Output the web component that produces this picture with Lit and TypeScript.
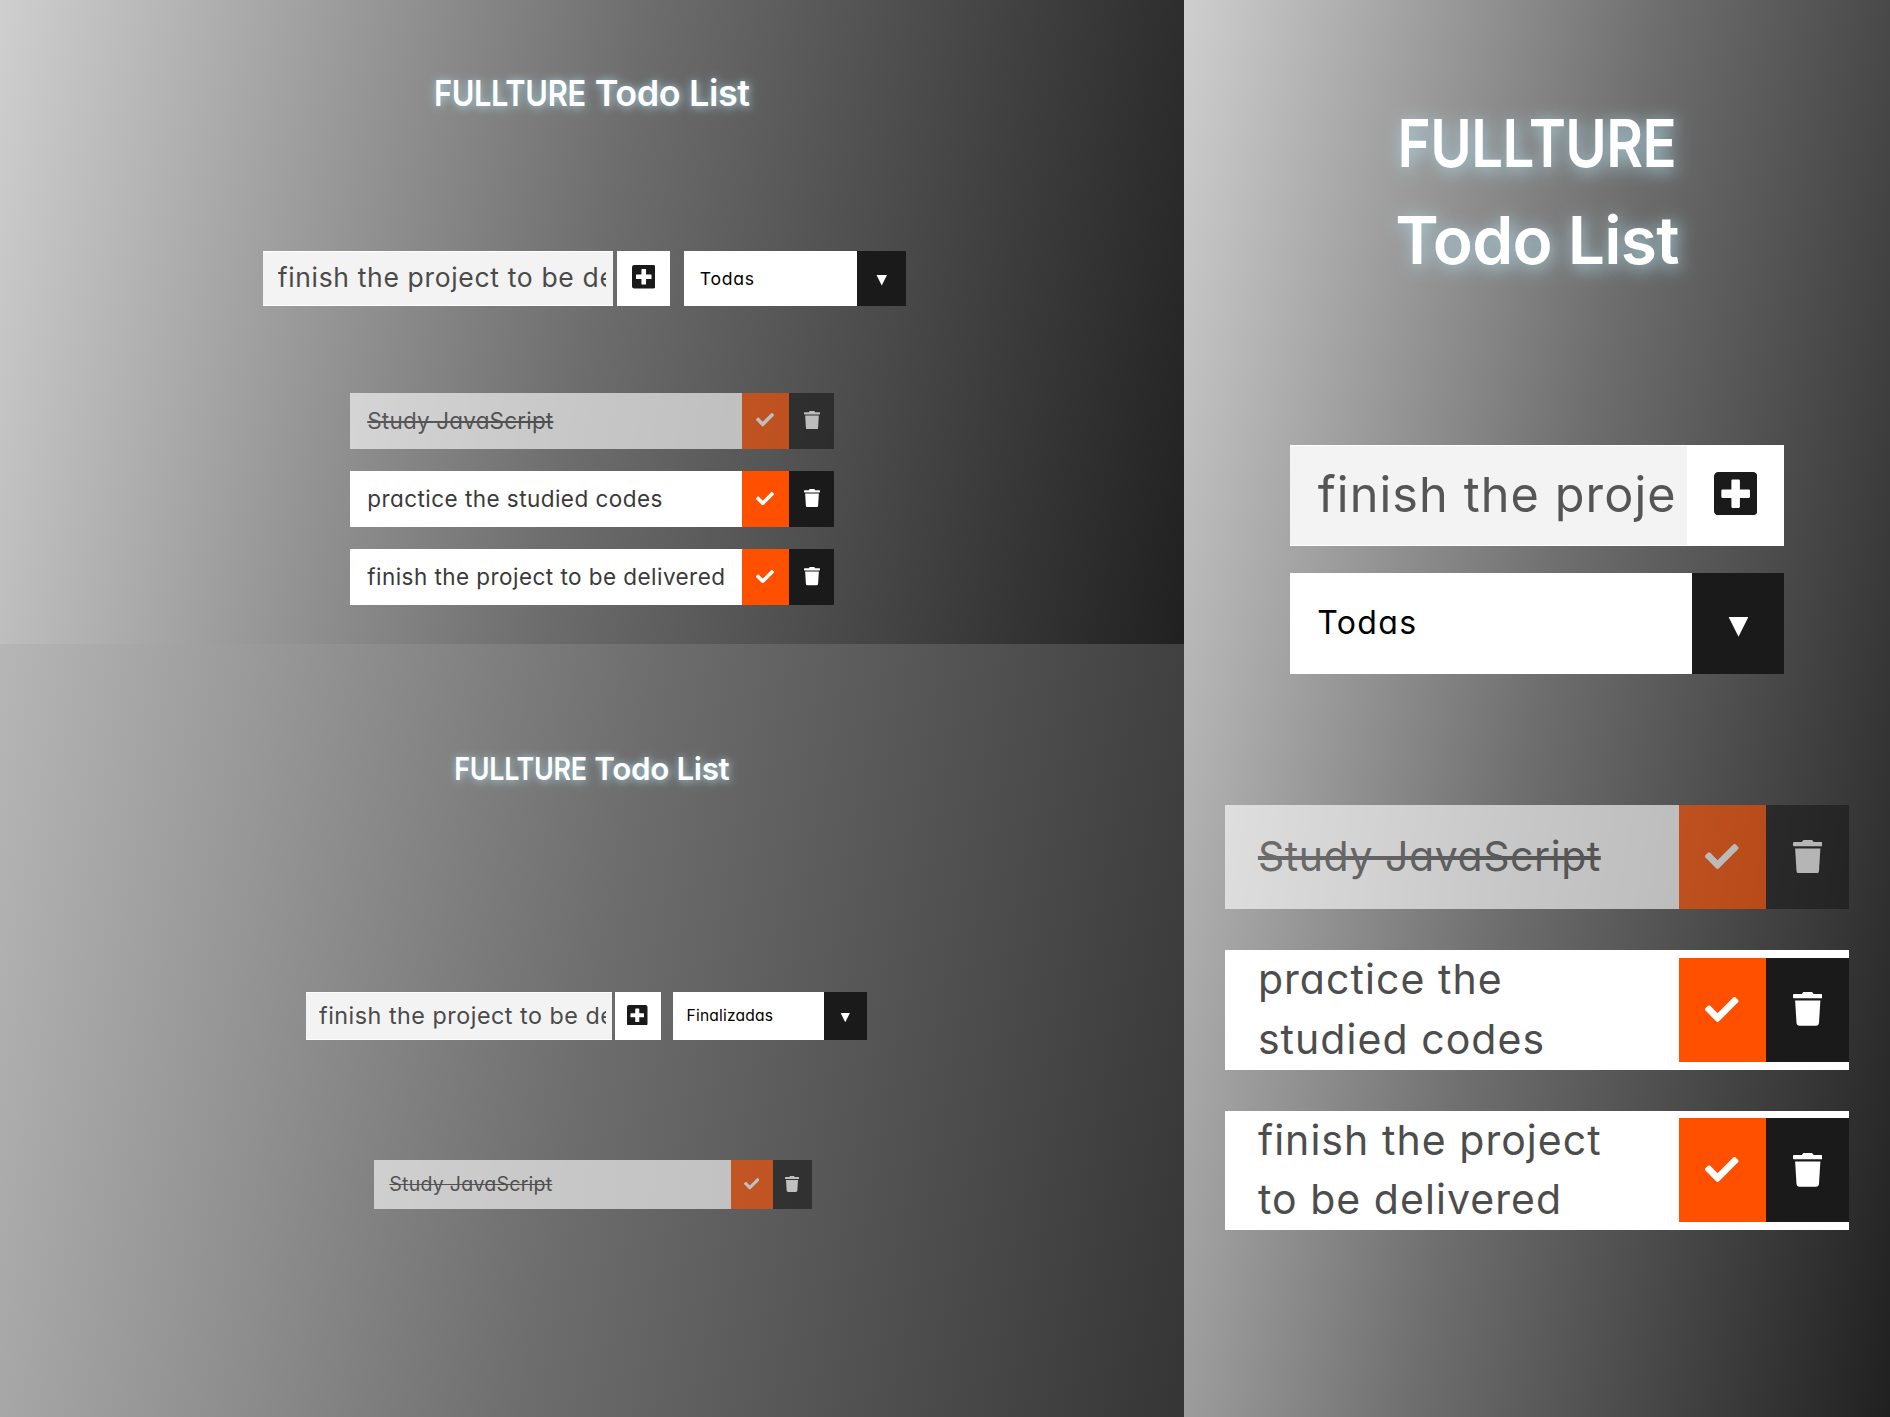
import { LitElement, html, css, svg } from "lit";
import { customElement, property } from "lit/decorators.js";

interface Todo {
  text: string;
  done?: boolean;
}

const TODOS: Todo[] = [
  { text: "Study JavaScript", done: true },
  { text: "practice the studied codes" },
  { text: "finish the project to be delivered" },
];

const icon = (viewBox: string, name: string, shape: unknown) =>
  html`<svg class="icon ${name}" viewBox=${viewBox} aria-hidden="true">${shape}</svg>`;

const plusIcon = () =>
  icon(
    "0 0 448 448",
    "plus",
    svg`<path fill-rule="evenodd" d="M44 0H404a44 44 0 0 1 44 44V404a44 44 0 0 1-44 44H44a44 44 0 0 1-44-44V44A44 44 0 0 1 44 0ZM192 78q-12 0-12 12v90H88q-12 0-12 12v64q0 12 12 12h92v92q0 12 12 12h64q12 0 12-12v-92h92q12 0 12-12v-64q0-12-12-12h-92V90q0-12-12-12Z"/>`
  );

const checkIcon = () =>
  icon(
    "0 65 512 382",
    "check",
    svg`<path d="M173.898 439.404l-166.4-166.4c-9.997-9.997-9.997-26.206 0-36.204l36.203-36.204c9.997-9.998 26.207-9.998 36.204 0L192 312.69 432.095 72.596c9.997-9.997 26.207-9.997 36.204 0l36.203 36.204c9.997 9.997 9.997 26.206 0 36.204l-294.4 294.401c-9.998 9.997-26.207 9.997-36.204-.001z"/>`
  );

const trashIcon = () =>
  icon(
    "0 0 448 512",
    "trash",
    svg`<path d="M432 32H312l-9.4-18.7A24 24 0 0 0 281.1 0H166.8a23.72 23.72 0 0 0-21.4 13.3L136 32H16A16 16 0 0 0 0 48v32a16 16 0 0 0 16 16h416a16 16 0 0 0 16-16V48a16 16 0 0 0-16-16zM32 128l21.2 339a48 48 0 0 0 47.9 45h245.8a48 48 0 0 0 47.9-45L416 128z"/>`
  );

@customElement("todo-screen")
export class TodoScreen extends LitElement {
  @property() filter = "Todas";
  @property() draft = "";
  @property({ attribute: false }) todos: Todo[] = [];

  static styles = css`
    :host {
      display: block;
      overflow: hidden;
      font-family: Inter, "Open Sans", sans-serif;
      font-feature-settings: "cv11";
    }
    .header {
      box-sizing: border-box;
      height: var(--header-h);
      padding-top: var(--header-pad);
    }
    .title {
      margin: 0;
      display: flex;
      flex-direction: var(--title-dir, row);
      justify-content: center;
      align-items: center;
      gap: var(--title-gap);
      font-size: var(--title-size);
      line-height: var(--title-line);
      font-weight: 600;
      color: #fff;
      text-shadow: var(--glow);
    }
    .word {
      height: var(--title-line);
      white-space: nowrap;
      letter-spacing: -0.012em;
    }
    .brand {
      margin: 0 -0.38em;
      letter-spacing: -0.01em;
      transform: scaleX(0.855);
    }
    .toolbar {
      display: flex;
      flex-direction: var(--bar-dir, row);
      gap: var(--bar-gap);
      padding-left: var(--bar-left);
    }
    .entry {
      display: flex;
      gap: var(--entry-gap);
      height: var(--control-h);
    }
    .field {
      box-sizing: border-box;
      width: var(--field-w);
      padding: 0 var(--field-end) 0 var(--field-start);
      background: #f3f3f3;
      border-top: 1px solid #fff;
      border-bottom: 1px solid #fff;
    }
    .draft {
      overflow: hidden;
      white-space: nowrap;
      color: var(--draft-color);
      font-size: var(--draft-size);
      letter-spacing: var(--draft-space);
      line-height: var(--draft-line);
    }
    .add {
      display: flex;
      align-items: center;
      justify-content: center;
      width: var(--add-w);
      background: #fff;
      color: #1a1a1a;
    }
    .icon {
      display: block;
      fill: currentColor;
    }
    .plus {
      width: var(--plus);
      height: var(--plus);
      margin-bottom: var(--plus-lift);
    }
    .select {
      display: flex;
      height: var(--control-h);
    }
    .value {
      box-sizing: border-box;
      width: var(--value-w);
      padding-left: var(--value-start);
      background: #fff;
      color: #000;
      font-size: var(--value-size);
      letter-spacing: var(--value-space);
      line-height: var(--control-h);
    }
    .arrow {
      display: flex;
      align-items: center;
      justify-content: center;
      width: var(--arrow-w);
      background: #1a1a1a;
    }
    .caret {
      width: var(--caret);
      height: var(--caret);
      margin-top: var(--caret-drop);
      background: #fff;
      clip-path: polygon(0 0, 100% 0, 50% 100%);
    }
    .list {
      display: flex;
      flex-direction: column;
      align-items: center;
      gap: var(--list-gap);
      margin-top: var(--list-top);
      padding-left: var(--list-shift, 0);
    }
    .todo {
      display: flex;
      align-items: center;
      background: #fff;
    }
    .done {
      opacity: 0.62;
    }
    .text {
      box-sizing: border-box;
      width: var(--text-w);
      padding: 0 var(--text-end) 0 var(--text-start);
      font-size: var(--text-size);
      letter-spacing: var(--text-space);
      line-height: var(--text-line);
      color: var(--text-color);
    }
    .done .text {
      letter-spacing: calc(var(--text-space) - 0.012em);
      text-decoration: line-through;
    }
    .button {
      display: flex;
      align-items: center;
      justify-content: center;
      box-sizing: border-box;
      height: var(--row-h);
      padding-bottom: var(--icon-lift);
      color: #fff;
    }
    .complete {
      width: var(--complete-w);
      background: #ff5000;
    }
    .remove {
      width: var(--remove-w);
      background: #1a1a1a;
    }
    .check {
      width: var(--check);
      height: calc(var(--check) * 0.746);
    }
    .trash {
      width: var(--trash);
      height: calc(var(--trash) * 1.143);
    }
  `;

  render() {
    return html`
      <div class="header">
        <h1 class="title"><span class="word brand">FULLTURE</span> <span class="word">Todo List</span></h1>
      </div>
      <div class="toolbar">
        <div class="entry">
          <div class="field"><div class="draft">${this.draft}</div></div>
          <div class="add">${plusIcon()}</div>
        </div>
        <div class="select">
          <div class="value">${this.filter}</div>
          <div class="arrow"><div class="caret"></div></div>
        </div>
      </div>
      <div class="list">
        ${this.todos.map(
          (t) => html`<div class="todo ${t.done ? "done" : ""}">
            <div class="text">${t.text}</div>
            <div class="button complete">${checkIcon()}</div>
            <div class="button remove">${trashIcon()}</div>
          </div>`
        )}
      </div>
    `;
  }
}

@customElement("app-root")
export class AppRoot extends LitElement {
  static styles = css`
    :host {
      display: block;
    }
    .board {
      display: grid;
      grid-template-columns: 1184px 706px;
      grid-template-rows: 644px 773px;
      width: 1890px;
      height: 1417px;
      overflow: hidden;
    }
    .all {
      background: linear-gradient(100deg, #cfcfcf, #6d6d6d 50%, #202020);
      --header-h: 250.5px;
      --header-pad: 66px;
      --title-gap: 10px;
      --title-size: 36px;
      --title-line: 54px;
      --glow: 1px 1px 10px #add8e6;
      --bar-gap: 14.5px;
      --bar-left: 262.7px;
      --entry-gap: 3.5px;
      --control-h: 55px;
      --field-w: 350.8px;
      --field-start: 15px;
      --field-end: 7px;
      --draft-color: #4a4a4a;
      --draft-size: 26.5px;
      --draft-space: 0.66px;
      --draft-line: 50.5px;
      --add-w: 53px;
      --plus: 23.5px;
      --plus-lift: 2px;
      --value-w: 172.5px;
      --value-start: 15.2px;
      --value-size: 17.6px;
      --value-space: 0.75px;
      --arrow-w: 49.5px;
      --caret: 11px;
      --caret-drop: 4px;
      --list-top: 87px;
      --list-gap: 22.3px;
      --text-w: 392px;
      --text-start: 17.5px;
      --text-end: 0px;
      --text-size: 22.5px;
      --text-space: 0.45px;
      --text-line: 56px;
      --text-color: #3a3a3a;
      --row-h: 56px;
      --complete-w: 47px;
      --remove-w: 45.5px;
      --check: 18px;
      --trash: 16px;
      --icon-lift: 1px;
    }
    .finished {
      grid-row: 2;
      background: linear-gradient(100deg, #b6b6b6, #6d6d6d 50%, #353535);
      --header-h: 348.3px;
      --header-pad: 100.8px;
      --title-gap: 8.5px;
      --title-size: 31.4px;
      --title-line: 48px;
      --glow: 1px 1px 9px #add8e6;
      --bar-gap: 12.5px;
      --bar-left: 306px;
      --entry-gap: 3px;
      --control-h: 47.4px;
      --field-w: 305.5px;
      --field-start: 13px;
      --field-end: 6px;
      --draft-color: #4a4a4a;
      --draft-size: 23.3px;
      --draft-space: 0.52px;
      --draft-line: 45.6px;
      --add-w: 46px;
      --plus: 20.5px;
      --plus-lift: 2px;
      --value-w: 150.5px;
      --value-start: 13.5px;
      --value-size: 15.6px;
      --value-space: 0.2px;
      --arrow-w: 43.5px;
      --caret: 9.5px;
      --caret-drop: 3px;
      --list-top: 120px;
      --list-gap: 20px;
      --list-shift: 2px;
      --text-w: 356.4px;
      --text-start: 15px;
      --text-end: 0px;
      --text-size: 19.6px;
      --text-space: 0.45px;
      --text-line: 49.3px;
      --text-color: #3a3a3a;
      --row-h: 49.3px;
      --complete-w: 42px;
      --remove-w: 39px;
      --check: 15.5px;
      --trash: 14px;
      --icon-lift: 1px;
    }
    .mobile {
      grid-column: 2;
      grid-row: 1 / 3;
      background: linear-gradient(100deg, #cfcfcf, #6e6e6e 50%, #202020);
      --header-h: 445px;
      --header-pad: 94.6px;
      --title-dir: column;
      --title-gap: 0;
      --title-size: 66px;
      --title-line: 97px;
      --glow: 2px 3px 18px #add8e6;
      --bar-dir: column;
      --bar-gap: 27px;
      --bar-left: 105.7px;
      --entry-gap: 0;
      --control-h: 100.8px;
      --field-w: 397.3px;
      --field-start: 28px;
      --field-end: 13px;
      --draft-color: #555;
      --draft-size: 48.6px;
      --draft-space: 1.1px;
      --draft-line: 97.8px;
      --add-w: 97.5px;
      --plus: 43.3px;
      --plus-lift: 4px;
      --value-w: 402.8px;
      --value-start: 27.5px;
      --value-size: 32px;
      --value-space: 1.4px;
      --arrow-w: 92px;
      --caret: 20px;
      --caret-drop: 7px;
      --list-top: 131.4px;
      --list-gap: 40.9px;
      --text-w: 453.8px;
      --text-start: 33px;
      --text-end: 50px;
      --text-size: 41px;
      --text-space: 1.05px;
      --text-line: 59.9px;
      --text-color: #4d4d4d;
      --row-h: 104px;
      --complete-w: 87px;
      --remove-w: 83.4px;
      --check: 33.5px;
      --trash: 29.5px;
      --icon-lift: 1px;
    }
  `;

  render() {
    const wide = "finish the project to be de";
    return html`
      <main class="board">
        <todo-screen class="all" draft=${wide} .todos=${TODOS}></todo-screen>
        <todo-screen class="finished" draft=${wide} filter="Finalizadas" .todos=${TODOS.filter((t) => t.done)}></todo-screen>
        <todo-screen class="mobile" draft="finish the proje" .todos=${TODOS}></todo-screen>
      </main>
    `;
  }
}
